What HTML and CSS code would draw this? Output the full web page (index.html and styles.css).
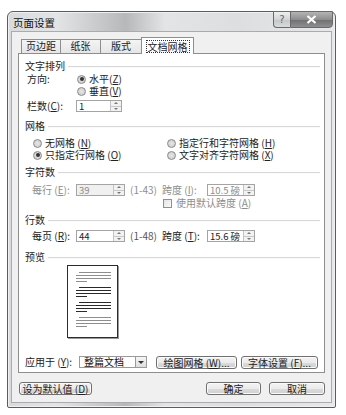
FILE: index.html
```html
<!DOCTYPE html>
<html lang="zh-CN">
<head>
    <meta charset="UTF-8">
    <title>页面设置</title>
    <link rel="stylesheet" href="styles.css">
</head>
<body>
<div class="window">
    <div class="titlebar">
        <span class="title">页面设置</span>
        <div class="caption">
            <span class="cap help">?</span>
            <span class="cap close">
                <svg width="11" height="9" viewBox="0 0 11 9"><path d="M1.5 1 L9.5 8 M9.5 1 L1.5 8" stroke="#fff" stroke-width="2.2" fill="none"/></svg>
            </span>
        </div>
    </div>

    <div class="client">
        <div class="tabs">
            <span class="tab w39">页边距</span>
            <span class="tab w40">纸张</span>
            <span class="tab w41">版式</span>
            <span class="tab active"><span class="focus">文档网格</span></span>
        </div>

        <div class="panel">
            <div class="legend"><span>文字排列</span></div>
            <div class="row mt1 in2">
                <span class="lbl w50">方向:</span>
                <span class="radio on"></span><span>水平(<u>Z</u>)</span>
            </div>
            <div class="row in52">
                <span class="radio"></span><span>垂直(<u>V</u>)</span>
            </div>
            <div class="row mt3 in2">
                <span class="lbl w49">栏数(<u>C</u>):</span>
                <span class="spin w46"><span class="val">1</span><span class="spinbtn"><i class="up"></i><i class="dn"></i></span></span>
            </div>

            <div class="legend mt8"><span>网格</span></div>
            <div class="row mt5 in8">
                <span class="col"><span class="radio"></span><span>无网格 (<u>N</u>)</span></span>
                <span class="col"><span class="radio"></span><span>指定行和字符网格 (<u>H</u>)</span></span>
            </div>
            <div class="row in8">
                <span class="col"><span class="radio on"></span><span>只指定行网格 (<u>O</u>)</span></span>
                <span class="col"><span class="radio"></span><span>文字对齐字符网格 (<u>X</u>)</span></span>
            </div>

            <div class="legend mt5"><span>字符数</span></div>
            <div class="row mt6 in7 off">
                <span class="lbl w44">每行 (<u>E</u>):</span>
                <span class="spin w49 dis"><span class="val">39</span><span class="spinbtn"><i class="up"></i><i class="dn"></i></span></span>
                <span class="range">(1-43)</span>
                <span class="lbl w45">跨度 (<u>I</u>):</span>
                <span class="spin w48"><span class="val">10.5 磅</span><span class="spinbtn"><i class="up"></i><i class="dn"></i></span></span>
            </div>
            <div class="row mt1 in138 off">
                <span class="check"></span><span>使用默认跨度 (<u>A</u>)</span>
            </div>

            <div class="legend mt5"><span>行数</span></div>
            <div class="row mt4 in7">
                <span class="lbl w44">每页 (<u>R</u>):</span>
                <span class="spin w49"><span class="val">44</span><span class="spinbtn"><i class="up"></i><i class="dn"></i></span></span>
                <span class="range">(1-48)</span>
                <span class="lbl w45">跨度 (<u>T</u>):</span>
                <span class="spin w48"><span class="val">15.6 磅</span><span class="spinbtn"><i class="up"></i><i class="dn"></i></span></span>
            </div>

            <div class="legend mt9"><span>预览</span></div>
            <div class="page">
                <div class="para gray"><i class="ind"></i><i></i><i></i><i class="short"></i></div>
                <div class="para dark"><i class="ind"></i><i></i><i></i><i class="short"></i></div>
                <div class="para dark"><i class="ind"></i><i></i><i></i><i class="short"></i></div>
                <div class="para gray"><i class="ind"></i><i></i><i></i><i class="short"></i></div>
            </div>

            <div class="row apply">
                <span class="lbl w54">应用于 (<u>Y</u>):</span>
                <span class="select"><span class="val">整篇文档</span><span class="drop"></span></span>
                <button class="btn grid-btn">绘图网格 (<u>W</u>)...</button>
                <button class="btn font-btn">字体设置 (<u>F</u>)...</button>
            </div>
        </div>

        <div class="footer">
            <button class="btn def-btn">设为默认值 (<u>D</u>)</button>
            <span class="spacer"></span>
            <button class="btn ok-btn">确定</button>
            <button class="btn cancel-btn">取消</button>
        </div>
    </div>
</div>
</body>
</html>
```

FILE: styles.css
```css
* { box-sizing: border-box; }
body { margin: 0; background: #fff; font-family: "Noto Sans CJK SC", "Noto Sans", sans-serif; font-size: 10px; line-height: 12px; color: #222; }
u { text-decoration: underline; text-underline-offset: 1px; }
i { display: block; }

/* window frame */
.window { margin: 11px 0 0 7px; width: 329px; height: 397px; border: 1px solid #5c5c5c; border-radius: 6px 6px 2px 2px;
  background: linear-gradient(to right, #d8dadc 0%, #e2e4e6 15%, #b6b8ba 36%, #e2e4e6 48%, #dcdee0 70%, #e6e8ea 100%);
  box-shadow: inset 0 0 0 1px #eef0f2; }
.titlebar { height: 19px; display: flex; align-items: flex-start; padding-left: 5px; }
.title { margin-top: 5px; font-size: 10.5px; color: #111; }
.caption { margin-left: auto; margin-right: 2px; margin-top: -1px; display: flex; }
.cap { height: 17px; display: flex; align-items: center; justify-content: center; border: 1px solid #6a6a6a; }
.help { width: 17px; border-radius: 0 0 0 4px; border-right: none; color: #666; font-family: "DejaVu Sans", sans-serif; font-size: 10px;
  background: linear-gradient(#eceeef, #d2d4d6 50%, #c3c5c7 51%, #d9dbdd); }
.close { width: 43px; border-radius: 0 0 4px 0;
  background: linear-gradient(#b4b4b4, #8e8e8e 50%, #6f6f6f 51%, #8f8f8f); }

.client { margin: 0 3px; height: 372px; background: #f0f0f0; border: 1px solid #a9abad; padding: 0 6px; }

/* tabs */
.tabs { height: 21px; display: flex; align-items: flex-end; padding-left: 3px; position: relative; z-index: 1; }
.tab { height: 14px; border: 1px solid #8e8e8e; border-bottom: none; text-align: center; color: #222;
  background: linear-gradient(#f4f4f4, #e6e6e6); margin-right: -1px; line-height: 12px; }
.w39 { width: 40px; }
.w40 { width: 41px; }
.w41 { width: 42px; }
.tab.active { height: 17px; width: 53px; margin-left: 0; background: #fff; padding-top: 2px; margin-bottom: -1px; }
.focus { display: inline-block; border: 1px dotted #333; padding: 0 1px; line-height: 11px; }

/* panel */
.panel { height: 320px; background: #fff; border: 1px solid #8e8e8e; padding: 6px 4px 0 6px; }
.legend { display: flex; align-items: center; height: 12px; }
.legend::after { content: ""; flex: 1; height: 1px; background: #d8d8d8; margin-left: 3px; box-shadow: 0 1px 0 #fafafa; }
.row { display: flex; align-items: center; height: 12px; white-space: nowrap; }
.mt1 { margin-top: 1px; }
.mt3 { margin-top: 3px; }
.mt4 { margin-top: 4px; }
.mt5 { margin-top: 5px; }
.mt6 { margin-top: 6px; }
.mt8 { margin-top: 8px; }
.mt9 { margin-top: 9px; }
.in2 { padding-left: 2px; }
.in7 { padding-left: 7px; }
.in8 { padding-left: 8px; }
.in52 { padding-left: 52px; }
.in138 { padding-left: 138px; }
.lbl { flex: none; }
.w44 { width: 44px; }
.w45 { width: 45px; }
.w46 { width: 46px; }
.w48 { width: 48px; }
.w49 { width: 49px; }
.w50 { width: 50px; }
.w54 { width: 54px; }
.off { color: #8d8d8d; }
.col { display: flex; align-items: center; width: 134px; }

.radio { width: 9px; height: 9px; border: 1px solid #8a8a8a; border-radius: 50%; margin-right: 3px; flex: none;
  background: radial-gradient(circle, #e6e6e6, #c9c9c9); display: flex; align-items: center; justify-content: center; }
.radio.on::after { content: ""; width: 4px; height: 4px; border-radius: 50%; background: #333; }
.check { width: 9px; height: 9px; border: 1px solid #8f8f8f; background: linear-gradient(135deg, #e4e4e4, #fafafa); margin-right: 4px; }

.spin { display: flex; height: 12px; border: 1px solid #a4a4a4; background: #fff; flex: none; }
.spin.dis { background: #f0f0f0; color: #8d8d8d; }
.spin .val { flex: 1; padding-left: 2px; line-height: 10px; font-size: 9.5px; color: #222; }
.spin.dis .val { color: #8d8d8d; }
.off .spin .val { color: #8d8d8d; }
.spinbtn { width: 11px; border-left: 1px solid #c4c4c4; background: #f2f2f2; display: flex; flex-direction: column; }
.spinbtn i { flex: 1; display: flex; align-items: center; justify-content: center; }
.spinbtn .up { border-bottom: 1px solid #c8c8c8; }
.spinbtn .up::after { content: ""; border: 2px solid transparent; border-bottom: 2px solid #777; border-top: none; }
.spinbtn .dn::after { content: ""; border: 2px solid transparent; border-top: 2px solid #777; border-bottom: none; }
.range { width: 32px; margin-left: 5px; color: #555; }
.off .range { color: #8d8d8d; }

/* preview */
.page { margin: 2px 0 0 42px; width: 51px; height: 73px; border: 1px solid #2c2c2c; background: #fff;
  box-shadow: 1px 1px 0 #9a9a9a; padding: 6px 0 0 8px; }
.para { width: 35px; margin-bottom: 5px; }
.para i { height: 1px; margin-bottom: 2px; }
.para .ind { margin-left: 3px; }
.para .short { width: 11px; margin-top: 1px; }
.gray i { background: #8e8e8e; }
.dark i { background: #2a2a2a; }
.para i:last-child { margin-bottom: 0; }

/* apply row */
.apply { margin-top: 18px; }
.select { display: flex; width: 68px; height: 12px; border: 1px solid #9a9a9a; background: #fff; margin-right: 9px; }
.select .val { flex: 1; padding-left: 4px; line-height: 10px; color: #111; }
.drop { width: 11px; border-left: 1px solid #9a9a9a; background: linear-gradient(#f6f6f6, #dedede); display: flex; align-items: center; justify-content: center; }
.drop::after { content: ""; border: 3px solid transparent; border-top: 3px solid #333; border-bottom: none; }

.btn { font: inherit; color: #222; height: 13px; padding: 0; line-height: 11px; border: 1px solid #707070; border-radius: 3px;
  background: linear-gradient(#f3f3f3, #ebebeb 50%, #dcdcdc 51%, #cfcfcf); box-shadow: inset 0 0 0 1px #fbfbfb; }
.grid-btn { width: 81px; margin-right: 4px; }
.font-btn { width: 77px; }

/* footer */
.footer { display: flex; margin-top: 9px; padding-left: 1px; }
.spacer { flex: 1; }
.def-btn { width: 73px; }
.ok-btn { width: 55px; margin-right: 8px; }
.cancel-btn { width: 56px; }
```
